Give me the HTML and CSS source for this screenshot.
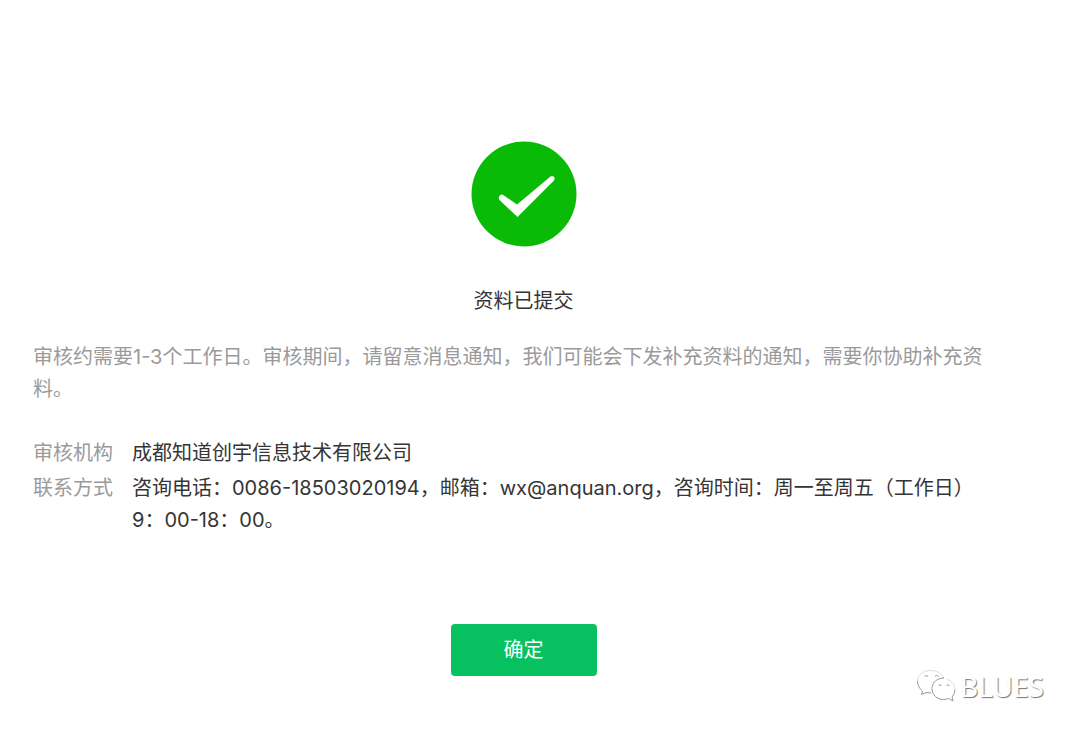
FILE: index.html
```html
<!DOCTYPE html>
<html lang="zh-CN">
<head>
    <meta charset="UTF-8">
    <meta name="viewport" content="width=device-width, initial-scale=1.0">
    <title>资料已提交</title>
    <link rel="stylesheet" href="styles.css">
</head>
<body>
    <main class="result">
        <svg class="result-icon" viewBox="0 0 106 106" aria-hidden="true">
            <circle cx="53" cy="53" r="52.5" fill="#09bb07"/>
            <path d="M28.500 55Q30.500 52.500 33 54.500L46 63.500L79.500 35.500Q82 34 83.500 36.500Q84 38.500 82.500 40L46.500 76L28.500 59Q27 57 28.500 55Z" fill="#fff"/>
        </svg>
        <h1>资料已提交</h1>
        <p class="tips">审核约需要1-3个工作日。审核期间，请留意消息通知，我们可能会下发补充资料的通知，需要你协助补充资料。</p>

        <dl class="details">
            <dt>审核机构</dt>
            <dd>成都知道创宇信息技术有限公司</dd>
            <dt>联系方式</dt>
            <dd>咨询电话：0086-18503020194，邮箱：wx@anquan.org，咨询时间：周一至周五（工作日）9：00-18：00。</dd>
        </dl>

        <button type="button" class="confirm">确定</button>
    </main>

    <div class="watermark">
        <svg class="watermark-icon" viewBox="0 0 40 34" aria-hidden="true">
            <!-- faint outlines -->
            <path class="light" d="M1.500 12C1.500 6.500 7 1.500 14.500 1.500C21.500 1.500 27 5 28 10M31 10.500C36 12 39 16 39 20.500"/>
            <!-- shaded edges and eyes -->
            <path class="shade" d="M1.500 12C1.500 16.500 3.500 19.500 6.500 22L5.500 25.500L10 23.500L15 24M28 9C21 9 16 13.500 16 19.500C16 26 21 30.500 27.500 30.500Q30 30.500 32.500 29.500L37 32L36 28Q39 25 39 20.500"/>
            <path class="shade" d="M8.500 7.500Q10 5.500 12 7.500M19 7.500Q20.500 5.500 22.500 7.500M22.500 16.500Q24 15 25.500 16.500M30.500 16.500Q32 15 33.500 16.500"/>
        </svg>
        <span>BLUES</span>
    </div>
</body>
</html>
```

FILE: styles.css
```css
* {
    margin: 0;
    padding: 0;
    box-sizing: border-box;
}

body {
    min-height: 100vh;
    font-family: Inter, "Noto Sans CJK SC", sans-serif;
    font-size: 20px;
    line-height: 32px;
    color: #353535;
    background-color: #fff;
}

.result {
    display: flex;
    flex-direction: column;
    align-items: center;
    padding: 141px 66px 56px 33px;
}

.result-icon {
    width: 106px;
    height: 106px;
}

h1 {
    margin-top: 38px;
    font-size: 20px;
    font-weight: 400;
}

.tips {
    width: 100%;
    margin-top: 24px;
    color: #9a9a9a;
}

.details {
    display: grid;
    grid-template-columns: 80px 1fr;
    gap: 3px 19px;
    width: 100%;
    margin-top: 32px;
    padding-right: 40px;
}

.details dt {
    color: #9a9a9a;
}

.confirm {
    width: 146px;
    height: 52px;
    margin-top: 88px;
    border: none;
    border-radius: 4px;
    background-color: #07c160;
    color: #fff;
    font: inherit;
    cursor: pointer;
}

.confirm:hover {
    background-color: #06ad56;
}

.watermark {
    position: absolute;
    right: 36px;
    bottom: 30px;
    display: flex;
    align-items: center;
    gap: 4px;
    font-family: "Noto Sans", sans-serif;
    font-size: 28px;
    color: #fff;
    text-shadow: 1px 1px 1px #777;
}

.watermark-icon {
    width: 40px;
    height: 34px;
    fill: none;
    stroke-linejoin: round;
}

.light {
    stroke: #ddd;
}

.shade {
    stroke: #999;
}
```
